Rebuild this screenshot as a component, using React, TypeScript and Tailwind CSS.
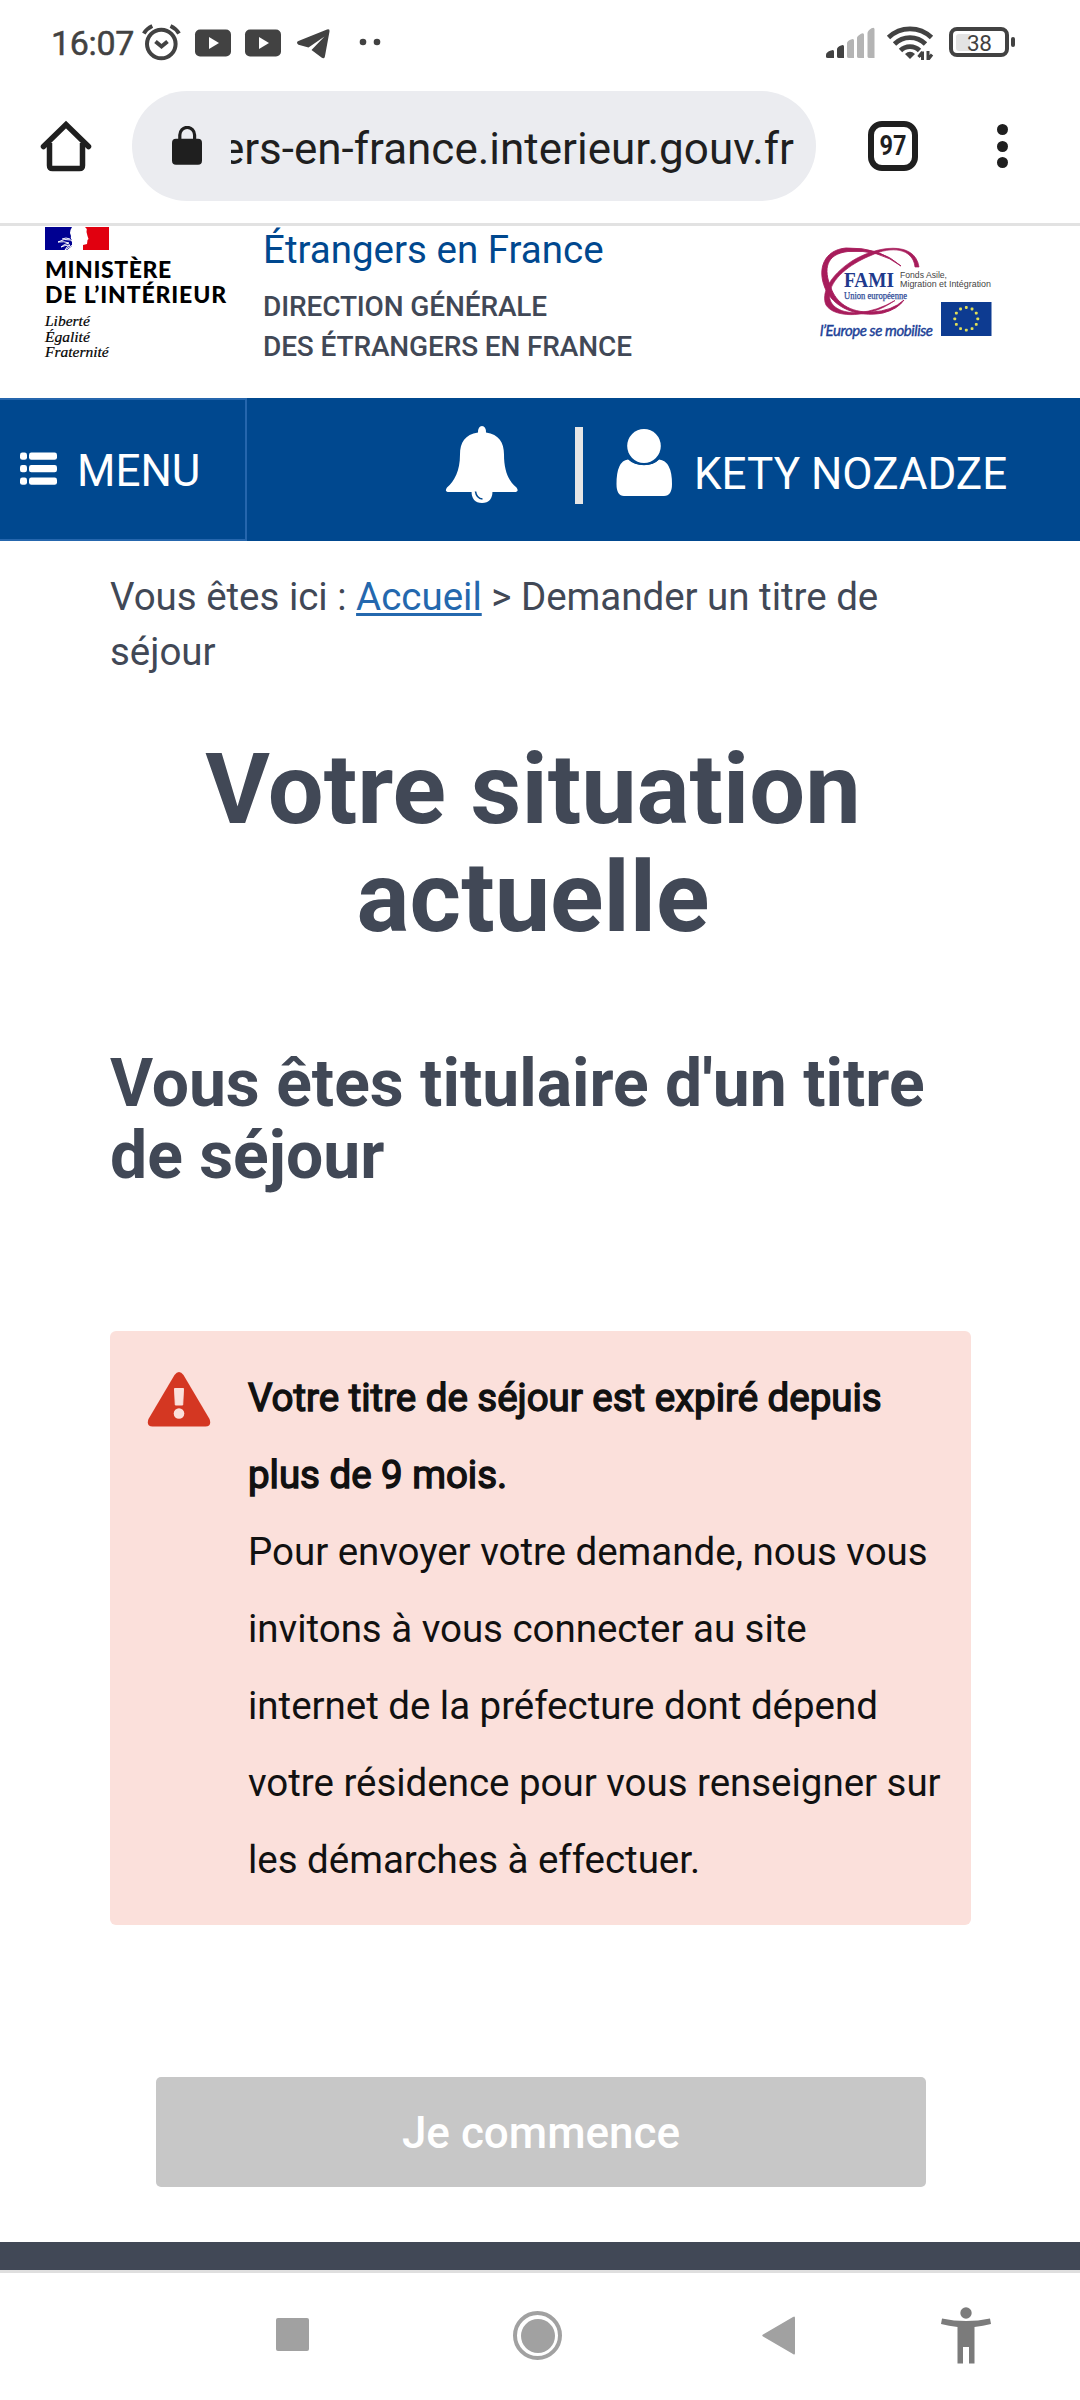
import React from "react";

const stars = Array.from({ length: 12 }, (_, i) => {
  const a = (i * Math.PI) / 6;
  return { x: 966.3 + 11.5 * Math.sin(a), y: 318.8 - 11.3 * Math.cos(a) };
});

function StatusBar() {
  return (
    <div className="flex h-[84px] items-start text-[#424242]">
      <div className="ml-[51px] mt-[23px] w-[90px] text-[34px] leading-10 font-normal tracking-[-0.3px] [-webkit-text-stroke:0.5px_#424242]">16:07</div>
      <svg className="mt-5 h-11 w-[250px] shrink-0" viewBox="141 20 250 44">
        <circle cx="161.3" cy="44" r="14.3" fill="none" stroke="#424242" strokeWidth="4" />
        <path d="M143.8 33.5q3-5 8.5-7.5M179 33.5q-3-5-8.5-7.5" fill="none" stroke="#424242" strokeWidth="4" />
        <path d="m155.500 41.500 6 5 6-5" fill="none" stroke="#424242" strokeWidth="4" />
        {[195, 245].map((x) => (
          <g key={x}>
            <rect x={x} y="29.500" width="36" height="27" rx="5" fill="#424242" />
            <path d={`M${x + 14} 37v12l10-6z`} fill="#fff" />
          </g>
        ))}
        <path d="M297 42.500q0-1 2-1.800l28-11.300q3-1 2.500 2l-4.600 25q-.7 3-3.400 1.200l-10-7.500 13-13.500-16 11-10-2.800q-1.500-.8-1.500-2.300z" fill="#424242" />
        <circle cx="363" cy="42" r="3.300" fill="#424242" />
        <circle cx="377" cy="42" r="3.300" fill="#424242" />
      </svg>
      <svg className="ml-[435px] mt-5 h-11 w-[112px] shrink-0" viewBox="826 20 112 44">
        <path d="M826 55q0-3 5-4.500 3-1.500 3 1V58h-6q-2 0-2-1z" fill="#424242" />
        <path d="M837 49q0-2 4-3.600 3-1.400 3 1V58h-5q-2 0-2-1.500z" fill="#424242" />
        <path d="M847 43q0-2 4-3.600 3-1.400 3 1V58h-5q-2 0-2-1.500zM857 38q0-2 4-4.300 3-1.400 3 1V58h-5q-2 0-2-1.500zM867.500 33q0-2 4-4.800 3-1.400 3 1V58h-5q-2 0-2-1.500z" fill="#b4b4b4" />
        <g fill="none" stroke="#424242" strokeWidth="4.800">
          <path d="M888.500 37.500a31 31 0 0 1 43 0" />
          <path d="M894.500 44a22 22 0 0 1 31 0" />
          <path d="M900.500 50.500a13.500 13.500 0 0 1 19 0" />
        </g>
        <path d="M905 54q5-4.500 10 0l-5 5z" fill="#424242" />
        <path d="M922.500 51.500V60M922.500 52l-4 5M928 51v9M928.500 59l3.500-4.500" stroke="#424242" strokeWidth="3" fill="none" />
      </svg>
      <div className="ml-[11px] mt-[27px] flex h-[30px] w-[60px] items-center rounded-[8px] border-4 border-[#424242] p-[3px]">
        <div className="h-[17px] w-[14px] shrink-0 rounded-l-[3px] bg-[#e3e3e3]" />
        <div className="mt-[2px] ml-[-3px] text-[22.500px] leading-5 tracking-[-0.3px]">38</div>
      </div>
      <div className="ml-[2px] mt-[37px] h-[10px] w-1 rounded-[2px] bg-[#424242]" />
    </div>
  );
}

function BrowserBar() {
  return (
    <div className="flex h-[142px] items-start border-b-[3px] border-[#e2e2e2] pt-[7px] text-[#1f1f1f]">
      <svg className="ml-[39px] mt-[28px] h-[56px] w-[54px] shrink-0" viewBox="39 119 54 56" fill="none" stroke="#1f1f1f">
        <path d="M43.500 146.500 66 124.500l22.500 22" strokeWidth="5.500" strokeLinecap="round" strokeLinejoin="miter" />
        <path d="M49.500 143v22.500q0 3 3 3h27q3 0 3-3V143" strokeWidth="5.500" />
      </svg>
      <div className="ml-[39px] flex h-[110px] w-[684px] items-center rounded-full bg-[#ebecf0] pl-[40px]">
        <svg className="h-[40px] w-[30px] shrink-0" viewBox="172 126 30 40">
          <rect x="172" y="138.700" width="30" height="26" rx="4" fill="#1f1f1f" />
          <path d="M179.800 140v-5a7.400 7.600 0 0 1 14.800 0v5" fill="none" stroke="#1f1f1f" strokeWidth="3.200" />
        </svg>
        <div className="ml-[29px] flex w-[563px] justify-end overflow-hidden pt-[5px] whitespace-nowrap text-[44px] leading-[56px]">
          <span>ers-en-france.interieur.gouv.fr</span>
        </div>
      </div>
      <div className="ml-[52px] mt-[30px] flex size-[50px] items-center justify-center rounded-[14px] border-[6px] border-[#1f1f1f] text-[28px] leading-none font-bold">
        <span className="scale-x-[0.84]">97</span>
      </div>
      <div className="ml-[79px] mt-[33px] flex flex-col gap-[5.300px]">
        <span className="size-[11.300px] rounded-full bg-[#1f1f1f]" />
        <span className="size-[11.300px] rounded-full bg-[#1f1f1f]" />
        <span className="size-[11.300px] rounded-full bg-[#1f1f1f]" />
      </div>
    </div>
  );
}

function SiteHeader() {
  return (
    <div className="flex h-[172px] items-start">
      <div className="ml-[45px] mt-[1px] w-[220px]">
        <svg className="h-[23px] w-16" viewBox="0 0 64 23">
          <rect width="27" height="23" fill="#000091" />
          <rect x="38" width="26" height="23" fill="#e1000f" />
          <path d="M27 0q-2 3-2 6l1 3q-1 3 2 5l-1 5-5 4h14l2-5 4-1 .500-4 1-1-1-3-1-4 .300-3L40 0z" fill="#fff" />
          <path d="M13 15q6-4 13-2l3 4-9 6q2-4 5-5-5 0-9 2 3-3 8-4-5-2-11-1zM17 12q4-2 8 0" fill="none" stroke="#fff" strokeWidth="1" />
        </svg>
        <div className="mt-[7px] font-[Lato] text-[23px] leading-[25px] font-black text-black">
          <div className="tracking-[0.6px]">MINISTÈRE</div>
          <div className="whitespace-nowrap tracking-[0.85px]">DE L’INTÉRIEUR</div>
        </div>
        <div className="mt-[6px] [font-family:'Liberation_Serif',serif] text-[15.500px] leading-[15.600px] text-black italic [-webkit-text-stroke:0.2px_#000]">
          <div>Liberté</div>
          <div>Égalité</div>
          <div>Fraternité</div>
        </div>
      </div>
      <div className="ml-[-2px] w-[520px]">
        <div className="h-[56px] text-[38.500px] leading-[48px] text-[#00488f]">Étrangers en France</div>
        <div className="mt-[5px] text-[28px] leading-[40px] font-medium tracking-[-0.13px] whitespace-nowrap text-[#414856]">
          <div>DIRECTION GÉNÉRALE</div>
          <div>DES ÉTRANGERS EN FRANCE</div>
        </div>
      </div>
      <svg className="ml-[29px] mt-[14px] h-[110px] w-[190px] shrink-0" viewBox="812 240 190 110">
        <path d="M901 266Q880 247 846 248C824 250 817 269 825 288C833 307 856 318 883 313Q898 309 904 300Q892 311 872 312C849 313 836 302 831 288C823 269 826 254 848 251.500Q879 249 901 266z" fill="#a71c5b" stroke="#a71c5b" strokeWidth="0.900" />
        <path d="M919 267C915 240 876 246 852 261C829 276 821 294 826 305C834 318 864 317 884 307Q888 305 895 300.500Q877 311 859 312.500C837 314 827 303 830 292C833 276 854 262 872 255C891 246 913 248 915 267z" fill="#a71c5b" stroke="#a71c5b" strokeWidth="0.700" />
        <path d="M842 293h66v7h-66z" fill="#fff" />
        <text x="844" y="286.500" fontFamily="Liberation Serif" fontWeight="700" fontSize="21.500" textLength="50" lengthAdjust="spacingAndGlyphs" fill="#20398c">FAMI</text>
        <text x="844" y="298.500" fontFamily="Liberation Serif" fontSize="9.300" textLength="63" lengthAdjust="spacingAndGlyphs" fill="#2f4c98" stroke="#2f4c98" strokeWidth="0.250">Union européenne</text>
        <text x="900" y="278" fontFamily="Liberation Sans" fontSize="8.600" textLength="47" lengthAdjust="spacingAndGlyphs" fill="#444">Fonds Asile,</text>
        <text x="900" y="286.500" fontFamily="Liberation Sans" fontSize="8.600" textLength="91" lengthAdjust="spacingAndGlyphs" fill="#444">Migration et Intégration</text>
        <text x="820" y="335.500" fontFamily="Lato" fontStyle="italic" fontSize="15" fontWeight="400" textLength="113" fill="#1c3f97" stroke="#1c3f97" strokeWidth="0.400">l’Europe se mobilise</text>
        <rect x="941" y="302" width="50.500" height="34" fill="#0d3b91" />
        {stars.map((s, i) => (
          <rect key={i} x={s.x - 1.4} y={s.y - 1.4} width="2.800" height="2.800" rx=".8" fill="#e2df58" />
        ))}
      </svg>
    </div>
  );
}

function NavBar() {
  return (
    <div className="flex h-[143px] items-start bg-[#00488f] text-[44px] text-white">
      <div className="flex h-[143px] w-[247px] items-start border-y-2 border-r-2 border-[#2566ad]">
        <svg className="ml-5 mt-[52px] h-[34px] w-[38px] shrink-0" viewBox="0 0 38 34" fill="#fff">
          {[0.5, 13, 25.5].map((y) => (
            <g key={y}>
              <rect y={y} width="7" height="7.300" rx="2.400" />
              <rect x="9" y={y} width="28" height="7.300" rx="2.400" />
            </g>
          ))}
        </svg>
        <span className="ml-[19px] mt-[43px] leading-[56px]">MENU</span>
      </div>
      <svg className="ml-[197px] mt-7 h-[80px] w-[76px] shrink-0" viewBox="444 426 76 80">
        <path d="M482 426q4 0 4 6.500c13 2 18 10 18 22 0 17 5 27 12.500 33q3 4.500-2 4.500H449q-5 0-2-4.500C454.500 481 460 471 460 454.500c0-12 5-20 18-22q0-6.500 4-6.500z" fill="#fff" />
        <path d="M471.500 491h21q0 12-10.500 12t-10.500-12z" fill="#fff" />
        <path d="M475.500 491.500q1 7 7 7.500" fill="none" stroke="#00488f" strokeWidth="1.600" />
      </svg>
      <div className="ml-[55px] mt-[29px] h-[77px] w-2 bg-[#e6e6e6]" />
      <svg className="ml-[32px] mt-[31px] h-[68px] w-[58px] shrink-0" viewBox="615 429 58 68" fill="#fff">
        <ellipse cx="644" cy="446" rx="16.800" ry="17" />
        <path d="M628 459.500q6 5.500 16 5.500t15-5.500q13 1.500 13 24.500 0 12-8 12h-40q-7.500 0-7.500-12 0-23 11.500-24.500z" />
        <path d="M629.500 459q6 5.500 14.500 5.500t14.500-5.500" fill="none" stroke="#00488f" strokeWidth="1.500" />
      </svg>
      <span className="ml-[21px] mt-[48px] leading-[56px] whitespace-nowrap">KETY NOZADZE</span>
    </div>
  );
}

export default function App() {
  return (
    <div className="h-[2400px] w-[1080px] overflow-hidden bg-white font-[Roboto,sans-serif]">
      <StatusBar />
      <BrowserBar />
      <SiteHeader />
      <NavBar />
      <main className="h-[1701px] px-[110px] pt-[28px] text-[#414856]">
        <nav className="text-[38.500px] leading-[55px] tracking-[-0.02px] whitespace-nowrap">
          Vous êtes ici : <a className="text-[#2468ae] underline decoration-[3px] underline-offset-[3px]">Accueil</a> &gt; Demander un titre de
          <br />
          séjour
        </nav>
        <h1 className="mt-[56px] ml-[-14px] text-center text-[99px] leading-[108px] font-bold">
          Votre situation
          <br />
          actuelle
        </h1>
        <h2 className="mt-[97px] text-[66px] leading-[72px] font-bold whitespace-nowrap">
          Vous êtes titulaire d'un titre
          <br />
          de séjour
        </h2>
        <section className="mt-[139px] flex h-[594px] w-[861px] items-start rounded-[6px] bg-[#fbe0db] text-[#111]">
          <svg className="ml-[37px] mt-[41px] h-[55px] w-[64px] shrink-0" viewBox="0 0 64 55">
            <path d="M27.500 3q4.500-6 9 0l26 44q2.500 7-4 7.500H5.500q-6.500-.5-4-7.500z" fill="#d43722" />
            <path d="M27.500 16.500h9l-.800 16.500h-7.400z" fill="#fbe0db" stroke="#fbe0db" strokeLinejoin="round" />
            <circle cx="32" cy="41.500" r="5.300" fill="#fbe0db" />
          </svg>
          <div className="ml-[37px] mt-[28px] text-[38.500px] leading-[77px] tracking-[-0.03px] whitespace-nowrap">
            <strong className="font-normal [-webkit-text-stroke:1.400px_#111]">
              Votre titre de séjour est expiré depuis
              <br />
              plus de 9 mois.
            </strong>
            <p>
              Pour envoyer votre demande, nous vous
              <br />
              invitons à vous connecter au site
              <br />
              internet de la préfecture dont dépend
              <br />
              votre résidence pour vous renseigner sur
              <br />
              les démarches à effectuer.
            </p>
          </div>
        </section>
        <button className="mt-[152px] ml-[46px] h-[110px] w-[770px] rounded-[5px] bg-[#c7c7c7] pt-[2px] text-[44px] leading-[56px] font-medium text-white">Je commence</button>
      </main>
      <div className="h-[31px] border-b-[3px] border-[#dfdfdf] bg-[#414856]" />
      <div className="flex h-[127px] items-start">
        <div className="ml-[276px] mt-[45px] size-[33px] rounded-[2px] bg-[#a1a1a1]" />
        <div className="ml-[204px] mt-[38px] flex size-[49px] items-center justify-center rounded-full border-4 border-[#a1a1a1]">
          <div className="size-[34px] rounded-full bg-[#a1a1a1]" />
        </div>
        <svg className="ml-[200px] mt-[43px] h-[39px] w-[33px]" viewBox="0 0 33 39">
          <path d="M31 1q2-1.500 2 1v35q0 2.500-2 1L1 20.500q-1.500-1 0-2z" fill="#a1a1a1" />
        </svg>
        <svg className="ml-[146px] mt-[34px] h-[57px] w-[50px]" viewBox="0 0 50 57" fill="#7b7b7b">
          <circle cx="25" cy="6" r="5.700" />
          <path d="M1 11.500q24 5 48 0l1 5.500q-8 2-16.500 3v36.500H28V40h-6v16.500h-5.500V20Q8 19 0 17z" />
        </svg>
      </div>
    </div>
  );
}
